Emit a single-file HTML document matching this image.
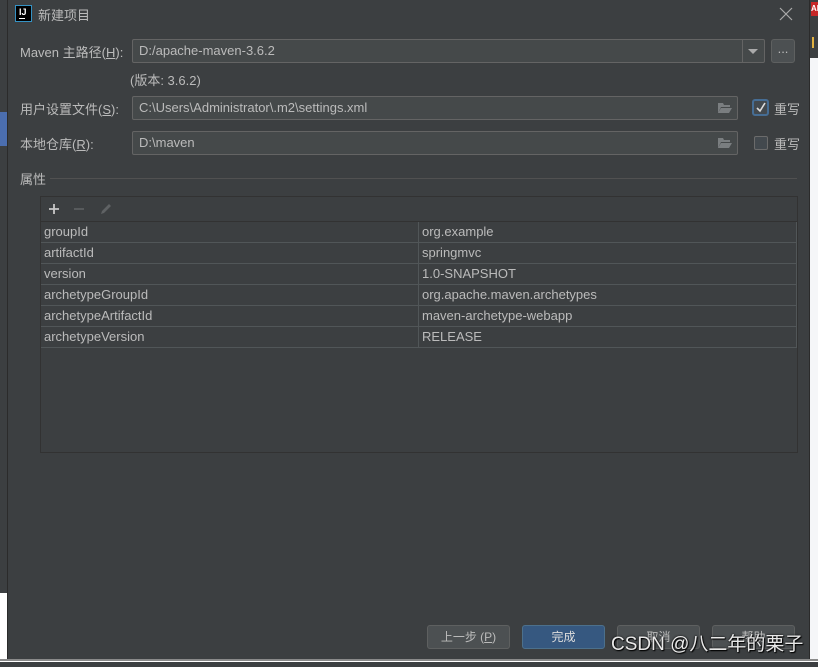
<!DOCTYPE html>
<html><head><meta charset="utf-8"><style>
*{box-sizing:border-box;margin:0;padding:0}
body{width:818px;height:667px;overflow:hidden;background:#3c3f41;position:relative;font-family:"Liberation Sans","Noto Sans CJK SC",sans-serif;font-size:13px;color:#bbbbbb}
.a{position:absolute}
.field{position:absolute;background:#45494a;border:1px solid #646464;border-radius:2px;height:24px;padding:0 0 0 6px;line-height:22px;color:#bbbbbb}
.lbl{position:absolute;color:#bbbbbb}
u{text-decoration:underline}
.row{position:absolute;left:41px;width:756px;height:21px;border-bottom:1px solid #515658;line-height:20px}
.row span{position:absolute;left:3px}
.row b{font-weight:normal;position:absolute;left:381px}
.btn{position:absolute;top:625px;width:83px;height:24px;border:1px solid #5e6060;border-radius:3px;background:#4c5052;text-align:center;line-height:22px;color:#bbbbbb;font-size:12px}
</style></head><body>
<div class="a" style="left:0;top:0;width:8px;height:667px;background:#3c3f41"></div>
<div class="a" style="left:0;top:112px;width:7px;height:34px;background:#4b6eaf"></div>
<div class="a" style="left:0;top:593px;width:7px;height:66px;background:#fff"></div>
<div class="a" style="left:7px;top:0;width:1px;height:660px;background:#2b2b2b"></div>
<div class="a" style="left:810px;top:0;width:8px;height:667px;background:#f5f6f8"></div>
<div class="a" style="left:810px;top:0;width:8px;height:58px;background:#3c3f41"></div>
<div class="a" style="left:811px;top:2px;width:7px;height:14px;background:#c62828;color:#fff;font-size:8px;font-weight:bold;line-height:14px">AP</div>
<div class="a" style="left:812px;top:37px;width:2px;height:11px;background:#e0b040"></div>
<div class="a" style="left:809px;top:0;width:1px;height:660px;background:#2b2b2b"></div>
<div class="a" style="left:0;top:659px;width:818px;height:2px;background:#8a8a8a"></div>
<div class="a" style="left:0;top:661px;width:818px;height:6px;background:#3c3f41"></div>
<div class="a" style="left:0;top:661px;width:818px;height:1px;background:#fff"></div>

<div class="a" style="left:15px;top:5px;width:17px;height:17px;border:1px solid #3592c4;background:#000"></div>
<div class="a" style="left:19px;top:7px;color:#fff;font-size:9px;font-weight:bold">IJ</div>
<div class="a" style="left:19px;top:18px;width:6px;height:1px;background:#fff"></div>
<div class="lbl" style="left:38px;top:5px;font-size:13px;color:#bbb">新建项目</div>
<svg class="a" style="left:779px;top:7px" width="14" height="14"><path d="M1 1L13 13M13 1L1 13" stroke="#aaa" stroke-width="1.2"/></svg>

<div class="lbl" style="left:20px;top:42px">Maven 主路径(<u>H</u>):</div>
<div class="field" style="left:132px;top:39px;width:633px">D:/apache-maven-3.6.2</div>
<div class="a" style="left:742px;top:40px;width:1px;height:22px;background:#646464"></div>
<svg class="a" style="left:747px;top:48px" width="12" height="7"><path d="M1 1h10L6 6z" fill="#aaa"/></svg>
<div class="a" style="left:771px;top:39px;width:24px;height:24px;border:1px solid #5e6060;border-radius:3px;background:#4c5052;text-align:center;line-height:18px;color:#bbb">...</div>

<div class="lbl" style="left:130px;top:70px">(版本: 3.6.2)</div>

<div class="lbl" style="left:20px;top:99px">用户设置文件(<u>S</u>):</div>
<div class="field" style="left:132px;top:96px;width:606px">C:\Users\Administrator\.m2\settings.xml</div>
<svg class="a" style="left:717px;top:102px" width="16" height="12"><path d="M1 1h5l1 2h6v2H4L1 11z" fill="#7a7e80"/><path d="M4 6h11l-3 5H1z" fill="#7a7e80"/></svg>
<div class="a" style="left:752px;top:99px;width:17px;height:17px;border:2px solid #466d94;border-radius:3px;background:#43494e"></div>
<svg class="a" style="left:755px;top:102px" width="12" height="11"><path d="M2 6l3 3 5-8" stroke="#ddd" stroke-width="1.6" fill="none"/></svg>
<div class="lbl" style="left:774px;top:99px">重写</div>

<div class="lbl" style="left:20px;top:134px">本地仓库(<u>R</u>):</div>
<div class="field" style="left:132px;top:131px;width:606px">D:\maven</div>
<svg class="a" style="left:717px;top:137px" width="16" height="12"><path d="M1 1h5l1 2h6v2H4L1 11z" fill="#7a7e80"/><path d="M4 6h11l-3 5H1z" fill="#7a7e80"/></svg>
<div class="a" style="left:754px;top:136px;width:14px;height:14px;border:1px solid #6b6b6b;border-radius:2px;background:#43494e"></div>
<div class="lbl" style="left:774px;top:134px">重写</div>

<div class="lbl" style="left:20px;top:169px">属性</div>
<div class="a" style="left:50px;top:178px;width:747px;height:1px;background:#515151"></div>

<div class="a" style="left:40px;top:196px;width:758px;height:257px;border:1px solid #323232"></div>
<div class="a" style="left:41px;top:221px;width:756px;height:1px;background:#323232"></div>
<svg class="a" style="left:47px;top:202px" width="72" height="14"><path d="M7 2v10M2 7h10" stroke="#c8c8c8" stroke-width="1.8"/><path d="M27 7h10" stroke="#5a5d5f" stroke-width="1.8"/><path d="M54 12l1-3 7-7 2 2-7 7z" fill="#5f6264"/></svg>
<div class="a" style="left:418px;top:222px;width:1px;height:126px;background:#515658"></div>
<div class="a" style="left:796px;top:222px;width:1px;height:126px;background:#515658"></div>
<div class="row" style="top:222px"><span>groupId</span><b>org.example</b></div>
<div class="row" style="top:243px"><span>artifactId</span><b>springmvc</b></div>
<div class="row" style="top:264px"><span>version</span><b>1.0-SNAPSHOT</b></div>
<div class="row" style="top:285px"><span>archetypeGroupId</span><b>org.apache.maven.archetypes</b></div>
<div class="row" style="top:306px"><span>archetypeArtifactId</span><b>maven-archetype-webapp</b></div>
<div class="row" style="top:327px"><span>archetypeVersion</span><b>RELEASE</b></div>

<div class="btn" style="left:427px">上一步 (<u>P</u>)</div>
<div class="btn" style="left:522px;background:#365880;border-color:#4c708c;color:#ddd">完成</div>
<div class="btn" style="left:617px">取消</div>
<div class="btn" style="left:712px">帮助</div>
<div class="a" style="left:611px;top:629px;font-size:19px;color:#e8e8e8;text-shadow:0 0 2px #000,1px 1px 1px #000">CSDN @八二年的栗子</div>
</body></html>
